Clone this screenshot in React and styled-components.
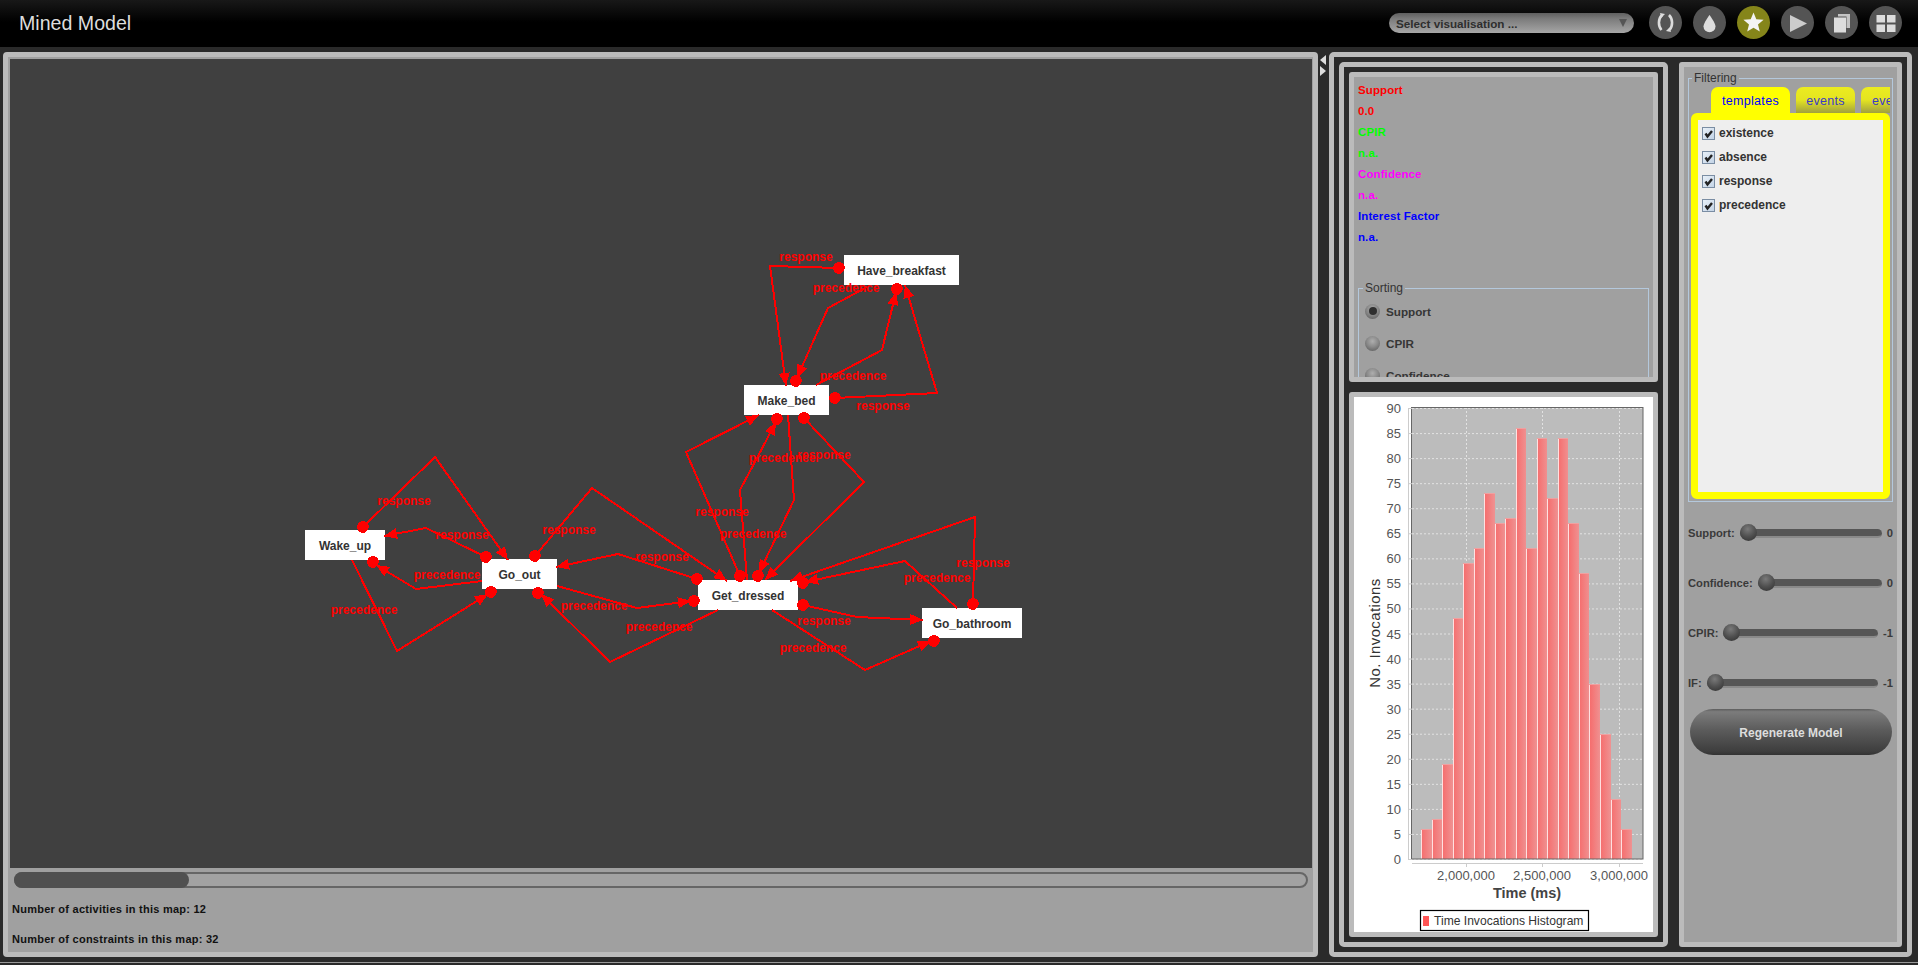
import React from 'react';
import styled, { createGlobalStyle } from 'styled-components';

const SANS = '"Liberation Sans", Arial, sans-serif';
const LIGHT = '#bbbbbb';
const DARK = '#2a2a2a';
const GRAY = '#a0a0a0';

const Global = createGlobalStyle`
  html, body { margin: 0; padding: 0; background: ${DARK}; }
  * { box-sizing: border-box; }
`;

const Page = styled.div`
  width: 1918px; height: 965px; overflow: hidden; background: ${DARK};
  font-family: ${SANS}; display: flex; flex-direction: column; position: relative;
`;
const Header = styled.header`
  height: 47px; flex: none; display: flex; align-items: center; justify-content: space-between;
  padding: 0 16px 3px 19px;
  background: linear-gradient(#181818 0, #000 22px, #000 100%);
`;
const Title = styled.h1`
  margin: 3px 0 0; font-size: 19.6px; font-weight: 400; color: #dddddd;
`;
const HeaderTools = styled.div`display: flex; align-items: center; gap: 11px;`;
const VisSelect = styled.div`
  width: 245px; height: 20px; margin: 2px 4px 0 0; border-radius: 10px; display: flex; align-items: center;
  justify-content: space-between; padding: 0 7px 0 7px;
  background: linear-gradient(#5f5f5f 0, #7c7c7c 30%, #a6a6a6 100%);
  color: #2e2e2e; font-size: 11.7px; font-weight: 700;
`;
const Caret = styled.span`
  width: 0; height: 0; border-left: 4px solid transparent; border-right: 4px solid transparent;
  border-top: 8px solid #555;
`;
const RoundIcon = styled.button`
  width: 33px; height: 33px; padding: 0; border: 0; border-radius: 50%; display: block;
  background: ${p => (p.$active ? '#85851a' : '#545454')};
  svg { display: block; }
`;

const Main = styled.main`
  flex: none; height: 910px; display: flex; align-items: flex-start; padding: 5px 6px 0 3px;
`;
const LeftPanel = styled.section`
  width: 1315px; height: 905px; flex: none; border: 5px solid ${LIGHT}; border-radius: 4px;
  background: ${GRAY}; padding: 2px 1px 0 2px; display: flex; flex-direction: column;
`;
const Canvas = styled.div`
  width: 1302px; height: 809px; flex: none; background: #404040; position: relative; overflow: hidden;
`;
const Edges = styled.svg`position: absolute; left: 0; top: 0; display: block;`;
const Node = styled.div`
  position: absolute; left: ${p => p.$x - 10}px; top: ${p => p.$y - 59}px; width: ${p => p.$w}px; height: 30px; padding-top: 1px;
  background: #fff; color: #333; font-size: 12px; font-weight: 700; display: flex; align-items: center; justify-content: center;
`;
const EdgeLabel = styled.text`
  font-family: ${SANS}; font-size: 12px; font-weight: 700; fill: #ff0000; text-anchor: middle; dominant-baseline: central;
`;
const Scrollbar = styled.div`
  margin: 4px 4px 6px 4px; height: 16px; border-radius: 8px; flex: none;
  border-top: 2px solid #666; border-bottom: 2px solid #666; border-left: 1px solid #666; border-right: 2px solid #666;
  background: #a2a2a2; position: relative;
`;
const ScrollThumb = styled.div`
  position: absolute; left: -1px; top: -2px; width: 175px; height: 16px; border-radius: 8px; background: #505050;
`;
const MapStat = styled.div`
  font-size: 11px; font-weight: 700; color: #111; letter-spacing: 0.25px; height: 30px; line-height: 30px; padding-left: 2px;
`;
const Divider = styled.div`
  width: 11px; height: 30px; flex: none; padding: 3px 0 0 2px; display: flex; flex-direction: column; gap: 1px;
`;
const DivArrow = styled.span`
  width: 0; height: 0; border-top: 5.5px solid transparent; border-bottom: 5.5px solid transparent;
  ${p => (p.$left ? 'border-right: 6px solid #ddd;' : 'border-left: 6px solid #ddd;')}
`;
const OuterFrame = styled.div`
  width: 583px; height: 905px; flex: none; border: 5px solid ${LIGHT}; border-radius: 5px; padding: 5px;
  display: flex; gap: 11px;
`;
const MiddleFrame = styled.div`
  width: 329px; height: 885px; flex: none; border: 5px solid ${LIGHT}; border-radius: 5px; padding: 5px;
  display: flex; flex-direction: column; gap: 10px;
`;
const InfoCard = styled.div`
  height: 310px; flex: none; border: 5px solid ${LIGHT}; border-radius: 3px; background: ${GRAY}; overflow: hidden; padding: 3px 4px 0;
`;
const InfoRow = styled.div`
  height: 21px; line-height: 21px; font-size: 11.5px; font-weight: 700; color: ${p => p.$c}; letter-spacing: 0.1px;
`;
const Group = styled.fieldset`
  margin: ${p => p.$margin}; padding: ${p => p.$padding}; border: 1px solid #b4c8dc; min-width: 0;
`;
const GroupTitle = styled.legend`
  margin-left: ${p => p.$offset}px; padding: 0 2px; font-size: 12px; line-height: 14px; color: #333;
`;
const RadioRow = styled.div`
  height: 32px; display: flex; align-items: center; gap: 6px; font-size: 11.7px; font-weight: 700; color: #363636; padding-left: 6px;
`;
const Radio = styled.span`
  width: 15px; height: 15px; border-radius: 50%; flex: none; display: flex; align-items: center; justify-content: center;
  background: radial-gradient(circle at 50% 35%, #aeaeae 0, #8a8a8a 45%, #555 100%);
  &::after { content: ''; width: 8px; height: 8px; border-radius: 50%; background: ${p => (p.$on ? '#2f2f2f' : 'transparent')}; }
`;
const ChartCard = styled.div`
  height: 545px; flex: none; border: 5px solid ${LIGHT}; border-radius: 3px; background: #fff; overflow: hidden;
  svg { display: block; }
`;
const AxisText = styled.text`
  font-family: ${SANS}; font-size: ${p => p.$size || 13}px; font-weight: ${p => p.$bold ? 700 : 400}; fill: ${p => p.$fill || '#555'};
  letter-spacing: ${p => p.$track || 0}px; text-anchor: ${p => p.$anchor || 'middle'}; dominant-baseline: central;
`;
const RightCol = styled.aside`
  width: 223px; height: 885px; flex: none; border: 5px solid ${LIGHT}; border-radius: 3px; background: ${GRAY}; padding-top: 4px; overflow: hidden;
`;
const TabRow = styled.div`display: flex; gap: 6px; padding-left: 20px; overflow: hidden; height: 26px;`;
const Tab = styled.div`
  flex: none; width: ${p => p.$w}px; height: 26px; border-radius: 7px 7px 0 0; display: flex; align-items: center;
  justify-content: ${p => (p.$clip ? 'flex-start' : 'center')}; padding: 1px 0 0 ${p => (p.$clip ? 11 : 0)}px;
  font-size: 12.5px; letter-spacing: 0.3px; overflow: hidden; white-space: nowrap;
  color: ${p => (p.$active ? '#0000ff' : '#3a3ac8')};
  background: ${p => (p.$active ? '#ffff00' : 'linear-gradient(#ecec20 0, #e4e420 50%, #a0a040 100%)')};
`;
const TabPanel = styled.div`
  height: 386px; border: 7px solid #ffff00; border-radius: 6px; background: #eeeeee; padding: 1px 0 0 4px;
`;
const CheckRow = styled.div`
  height: 24px; display: flex; align-items: center; gap: 4px; font-size: 12px; font-weight: 700; color: #333;
`;
const CheckBox = styled.span`
  width: 13px; height: 13px; flex: none; border: 1px solid #7a8da3; background: linear-gradient(135deg, #e8f0f8, #c4d4e6);
  svg { display: block; }
`;
const Sliders = styled.div`margin-top: 6px;`;
const SliderRow = styled.div`
  height: 50px; display: flex; align-items: center; gap: 5px; padding: 0 4px 0 4px;
  font-size: 11.2px; font-weight: 700; color: #3a3a3a;
`;
const Track = styled.div`
  flex: 1; height: 9px; border-radius: 5px; background: #565656; border-bottom: 2px solid #8a8a8a; display: flex; align-items: center;
`;
const Thumb = styled.span`
  width: 17px; height: 17px; border-radius: 50%; flex: none;
  background: radial-gradient(circle at 45% 30%, #7a7a7a 0, #505050 50%, #2c2c2c 100%);
`;
const Regenerate = styled.button`
  display: block; width: 202px; height: 46px; margin: 1px 0 0 6px; padding: 1px 0 0; border: 0; border-radius: 23px;
  background: linear-gradient(#5d5d5d 0, #7c7c7c 6%, #5c5c5c 45%, #3e3e3e 92%, #333 100%);
  color: #dddddd; font: 700 12px ${SANS};
`;
const BottomLine = styled.div`height: 1px; background: #999; flex: none; margin-top: 5px;`;

const edges = [
  { d: [363, 527], p: [[363, 527], [435, 457], [508, 560]], t: 'response', l: [404, 501] },
  { d: [486, 557], p: [[486, 557], [426, 528], [384, 536]], t: 'response', l: [462, 535] },
  { p: [[482, 581], [416, 589], [376, 565]], d: [373, 562], t: 'precedence', l: [447, 575] },
  { p: [[352, 560], [397, 651], [488, 594]], d: [491, 592], t: 'precedence', l: [364, 610] },
  { d: [535, 556], p: [[535, 556], [592, 488], [727, 581]], t: 'response', l: [569, 530] },
  { d: [697, 579], p: [[697, 579], [618, 554], [556, 567]], t: 'response', l: [662, 557] },
  { p: [[557, 586], [637, 608], [691, 601]], d: [694, 601], t: 'precedence', l: [594, 606] },
  { p: [[718, 610], [610, 662], [541, 594]], d: [538, 593], t: 'precedence', l: [659, 627] },
  { d: [803, 605], p: [[803, 605], [857, 617], [923, 620]], t: 'response', l: [824, 621] },
  { p: [[772, 610], [865, 670], [931, 641]], d: [934, 641], t: 'precedence', l: [813, 648] },
  { d: [973, 604], p: [[973, 604], [975, 517], [790, 581]], t: 'response', l: [983, 563] },
  { p: [[957, 608], [905, 561], [805, 582]], d: [803, 583], t: 'precedence', l: [937, 578] },
  { d: [839, 268], p: [[839, 268], [770, 266], [786, 386]], t: 'response', l: [806, 257] },
  { p: [[867, 287], [828, 308], [797, 378]], d: [796, 381], t: 'precedence', l: [846, 288] },
  { p: [[816, 385], [882, 350], [896, 292]], d: [897, 289], t: 'precedence', l: [853, 376] },
  { d: [835, 398], p: [[835, 398], [937, 393], [905, 285]], t: 'response', l: [883, 406] },
  { d: [740, 576], p: [[740, 576], [686, 452], [759, 415]], t: 'response', l: [722, 512] },
  { p: [[747, 580], [740, 490], [776, 422]], d: [777, 419], t: 'precedence', l: [753, 534] },
  { p: [[788, 415], [794, 500], [759, 573]], d: [758, 576], t: 'precedence', l: [782, 458] },
  { d: [804, 418], p: [[804, 418], [864, 482], [765, 580]], t: 'response', l: [824, 455] },
];
const nodes = [
  { n: 'Wake_up', x: 305, y: 530, w: 80 },
  { n: 'Go_out', x: 482, y: 559, w: 75 },
  { n: 'Get_dressed', x: 698, y: 580, w: 100 },
  { n: 'Go_bathroom', x: 922, y: 608, w: 100 },
  { n: 'Have_breakfast', x: 844, y: 255, w: 115 },
  { n: 'Make_bed', x: 744, y: 385, w: 85 },
];
const arrowHead = (a, b) => {
  const dx = b[0] - a[0], dy = b[1] - a[1], L = Math.hypot(dx, dy);
  const ux = dx / L, uy = dy / L, len = 13, hw = 5.5;
  const bx = b[0] - ux * len, by = b[1] - uy * len;
  return `${b[0]},${b[1]} ${bx - uy * hw},${by + ux * hw} ${bx + uy * hw},${by - ux * hw}`;
};

const bars = [6, 8, 19, 48, 59, 62, 73, 67, 68, 86, 62, 84, 72, 84, 67, 57, 35, 25, 12, 6];
const yTicks = Array.from({ length: 19 }, (_, i) => i * 5);
const yOf = v => 859 - v * 5.011;
const xTicks = [[1466, '2,000,000'], [1542, '2,500,000'], [1619, '3,000,000']];

const Graph = () => (
  <Edges width="1302" height="809" viewBox="10 59 1302 809">
    {edges.map((e, i) => {
      const pts = e.p;
      return (
        <g key={i} shapeRendering="crispEdges">
          <polyline points={pts.map(q => q.join(',')).join(' ')} fill="none" stroke="#ff0000" strokeWidth="2" />
          <polygon points={arrowHead(pts[pts.length - 2], pts[pts.length - 1])} fill="#ff0000" />
          <circle cx={e.d[0]} cy={e.d[1]} r="5.8" fill="#ff0000" />
        </g>
      );
    })}
    {edges.map((e, i) => <EdgeLabel key={i} x={e.l[0]} y={e.l[1]}>{e.t}</EdgeLabel>)}
  </Edges>
);

const Histogram = () => (
  <svg width="300" height="535" viewBox="1354 397 300 535">
    <defs>
      <linearGradient id="barFill" x1="0" x2="1" y1="0" y2="0">
        <stop offset="0" stopColor="#f66c6c" />
        <stop offset="1" stopColor="#ef9191" />
      </linearGradient>
    </defs>
    <rect x="1412" y="407" width="231" height="452" fill="#bcbcbc" />
    {yTicks.map(v => <line key={v} x1="1412" x2="1643" y1={yOf(v) + .5} y2={yOf(v) + .5} stroke="#e2e2e2" strokeDasharray="2 2" />)}
    {xTicks.map(([x]) => <line key={x} x1={x + .5} x2={x + .5} y1="407" y2="859" stroke="#e2e2e2" strokeDasharray="2 2" />)}
    {bars.map((v, i) => {
      const x = 1421 + i * 10.53;
      return (
        <g key={i} shapeRendering="crispEdges">
          <rect x={x} y={yOf(v)} width="10.53" height={859 - yOf(v)} fill="url(#barFill)" />
          <line x1={x + .5} x2={x + .5} y1={yOf(v)} y2="859" stroke="#ffe0e0" />
          <line x1={x} x2={x + 10.5} y1={yOf(v) + .5} y2={yOf(v) + .5} stroke="#f0a0a0" />
        </g>
      );
    })}
    <rect x="1411.5" y="407.5" width="231.5" height="451.5" fill="none" stroke="#666" />
    <line x1="1408.5" x2="1408.5" y1="408" y2="860" stroke="#ccc" />
    <line x1="1412" x2="1643" y1="863.5" y2="863.5" stroke="#ccc" />
    {yTicks.map(v => (
      <g key={v}>
        <line x1="1408" x2="1412" y1={yOf(v) + .5} y2={yOf(v) + .5} stroke="#ccc" />
        <AxisText x="1401" y={yOf(v) + .5} $anchor="end">{v}</AxisText>
      </g>
    ))}
    {xTicks.map(([x, t]) => (
      <g key={x}>
        <line x1={x + .5} x2={x + .5} y1="863" y2="867" stroke="#ccc" />
        <AxisText x={x} y="875">{t}</AxisText>
      </g>
    ))}
    <AxisText x="1527" y="893" $size="14.5" $bold $fill="#444">Time (ms)</AxisText>
    <AxisText x="0" y="0" $size="15" $track="0.4" $fill="#333" transform="translate(1374 633) rotate(-90)">No. Invocations</AxisText>
    <rect x="1420.5" y="910.5" width="168" height="20" fill="#fff" stroke="#000" strokeWidth="1.2" />
    <rect x="1423" y="916" width="6" height="10" fill="#ff5555" />
    <AxisText x="1434" y="921" $size="12.1" $anchor="start" $fill="#333">Time Invocations Histogram</AxisText>
  </svg>
);

const Tick = () => (
  <svg width="11" height="11" viewBox="0 0 11 11"><path d="M2.5 5.5 L4.5 8.5 L9 3" fill="none" stroke="#222" strokeWidth="2.4" /></svg>
);

const infoRows = [
  ['Support', '#ff0000'], ['0.0', '#ff0000'], ['CPIR', '#00ff00'], ['n.a.', '#00ff00'],
  ['Confidence', '#ff00ff'], ['n.a.', '#ff00ff'], ['Interest Factor', '#0000ff'], ['n.a.', '#0000ff'],
];
const sliders = [['Support:', '0'], ['Confidence:', '0'], ['CPIR:', '-1'], ['IF:', '-1']];

const icons = [
  <>
    <path d="M13 9 C9 13 9 20 12.5 24" fill="none" stroke="#ddd" strokeWidth="2.6" />
    <path d="M20 9 C24 13 24 20 20.5 24" fill="none" stroke="#ddd" strokeWidth="2.6" />
    <polygon points="11,7 16,8 12.5,11.5" fill="#ddd" />
    <polygon points="22,26 17,25 20.5,21.5" fill="#ddd" />
  </>,
  <path d="M16.5 9 C16.5 9 10.5 17 10.5 20.5 a6 5.8 0 0 0 12 0 C22.5 17 16.5 9 16.5 9z" fill="#dddddd" />,
  <polygon points="16.5,6.5 19.3,13.3 26.6,13.8 21,18.5 22.8,25.6 16.5,21.7 10.2,25.6 12,18.5 6.4,13.8 13.7,13.3" fill="#f4f4f4" />,
  <polygon points="9,9 26,17.5 9,26" fill="#cccccc" />,
  <>
    <rect x="13" y="8" width="12" height="14" fill="#c4c4c4" />
    <rect x="8" y="10.5" width="13.5" height="16" fill="#545454" />
    <rect x="9" y="11.5" width="12" height="15" fill="#dddddd" />
  </>,
  <>
    <rect x="7.5" y="9" width="8.5" height="7.5" fill="#dddddd" />
    <rect x="18" y="9" width="8.5" height="7.5" fill="#dddddd" />
    <rect x="7.5" y="18.5" width="8.5" height="7.5" fill="#dddddd" />
    <rect x="18" y="18.5" width="8.5" height="7.5" fill="#dddddd" />
  </>,
];

export default function App() {
  return (
    <Page>
      <Global />
      <Header>
        <Title>Mined Model</Title>
        <HeaderTools>
          <VisSelect>Select visualisation ...<Caret /></VisSelect>
          {icons.map((g, i) => (
            <RoundIcon key={i} $active={i === 2}>
              <svg width="33" height="33" viewBox="0 0 33 33">{g}</svg>
            </RoundIcon>
          ))}
        </HeaderTools>
      </Header>
      <Main>
        <LeftPanel>
          <Canvas>
            {nodes.map(n => <Node key={n.n} $x={n.x} $y={n.y} $w={n.w}>{n.n}</Node>)}
            <Graph />
          </Canvas>
          <Scrollbar><ScrollThumb /></Scrollbar>
          <MapStat>Number of activities in this map: 12</MapStat>
          <MapStat>Number of constraints in this map: 32</MapStat>
        </LeftPanel>
        <Divider>
          <DivArrow $left />
          <DivArrow />
        </Divider>
        <OuterFrame>
          <MiddleFrame>
            <InfoCard>
              {infoRows.map(([t, c], i) => <InfoRow key={i} $c={c}>{t}</InfoRow>)}
              <Group $margin="33px 0 0" $padding="0">
                <GroupTitle $offset={4}>Sorting</GroupTitle>
                <RadioRow><Radio $on />Support</RadioRow>
                <RadioRow><Radio />CPIR</RadioRow>
                <RadioRow><Radio />Confidence</RadioRow>
                <RadioRow><Radio />Interest Factor</RadioRow>
              </Group>
            </InfoCard>
            <ChartCard><Histogram /></ChartCard>
          </MiddleFrame>
          <RightCol>
            <Group $margin="0 4px" $padding="2px">
              <GroupTitle $offset={1}>Filtering</GroupTitle>
              <TabRow>
                <Tab $active $w={79}>templates</Tab>
                <Tab $w={59}>events</Tab>
                <Tab $w={59} $clip>events</Tab>
              </TabRow>
              <TabPanel>
                {['existence', 'absence', 'response', 'precedence'].map(t => (
                  <CheckRow key={t}><CheckBox><Tick /></CheckBox>{t}</CheckRow>
                ))}
              </TabPanel>
            </Group>
            <Sliders>
              {sliders.map(([l, v]) => (
                <SliderRow key={l}>
                  <span>{l}</span>
                  <Track><Thumb /></Track>
                  <span>{v}</span>
                </SliderRow>
              ))}
            </Sliders>
            <Regenerate>Regenerate Model</Regenerate>
          </RightCol>
        </OuterFrame>
      </Main>
      <BottomLine />
    </Page>
  );
}
